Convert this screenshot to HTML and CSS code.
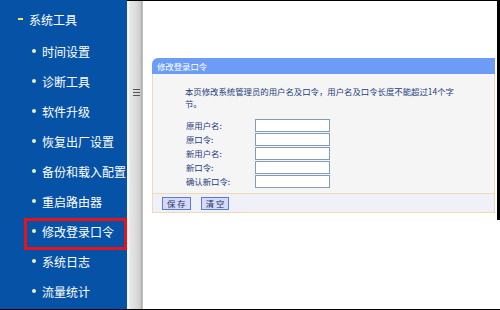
FILE: index.html
```html
<!DOCTYPE html>
<html lang="zh-CN">
<head>
<meta charset="utf-8">
<title>修改登录口令</title>
<link rel="stylesheet" href="styles.css">
</head>
<body>
<div class="page">
  <nav class="sidebar">
    <div class="group"><span class="dash"></span>系统工具</div>
    <ul class="menu">
      <li><span class="dot"></span>时间设置</li>
      <li><span class="dot"></span>诊断工具</li>
      <li><span class="dot"></span>软件升级</li>
      <li><span class="dot"></span>恢复出厂设置</li>
      <li><span class="dot"></span>备份和载入配置</li>
      <li><span class="dot"></span>重启路由器</li>
      <li class="hl"><span class="dot"></span>修改登录口令</li>
      <li><span class="dot"></span>系统日志</li>
      <li><span class="dot"></span>流量统计</li>
    </ul>
  </nav>
  <div class="splitter">
    <svg class="grip" width="7" height="9" viewBox="0 0 7 9"><path d="M0 1.5H7M0 4.5H7M0 7.5H7" stroke="#555" stroke-width="1.2"/></svg>
  </div>
  <main class="main">
    <div class="frame">
      <section class="panel">
        <div class="panel-head">修改登录口令</div>
        <div class="panel-body">
          <p class="desc">本页修改系统管理员的用户名及口令，用户名及口令长度不能超过14个字节。</p>
          <div class="form">
            <label>原用户名:</label><input type="text">
            <label>原口令:</label><input type="password">
            <label>新用户名:</label><input type="text">
            <label>新口令:</label><input type="password">
            <label>确认新口令:</label><input type="password">
          </div>
        </div>
        <div class="panel-foot">
          <button class="btn">保 存</button>
          <button class="btn">清 空</button>
        </div>
      </section>
    </div>
  </main>
</div>
</body>
</html>
```

FILE: styles.css
```css
* { box-sizing: border-box; }
html, body { margin: 0; padding: 0; background: #fff; }
body { font-family: "Noto Sans CJK SC", "Noto Sans", sans-serif; }

.page {
  display: flex;
  width: 500px;
  height: 310px;
  border-bottom: 1px solid #000;
  overflow: hidden;
}

/* sidebar */
.sidebar {
  width: 127px;
  flex: none;
  background: #0652a6;
  color: #fff;
  padding-top: 10px;
  font-size: 12px;
}
.group {
  display: flex;
  align-items: center;
  height: 18px;
  padding-left: 18px;
  margin-bottom: 8px;
}
.dash {
  width: 5px;
  height: 2px;
  background: #f2e35a;
  margin-right: 6px;
}
.menu { list-style: none; margin: 0; padding: 0; }
.menu li {
  display: flex;
  align-items: center;
  height: 30px;
  padding-left: 32px;
  white-space: nowrap;
}
.dot {
  width: 4px;
  height: 4px;
  border-radius: 50%;
  background: #eef5a8;
  margin-right: 6px;
}
.menu li.hl { position: relative; }
.menu li.hl::after {
  content: "";
  position: absolute;
  left: 24px;
  top: 2px;
  width: 97px;
  height: 26px;
  border: 3px solid #e3141c;
}

/* splitter */
.splitter {
  width: 16px;
  flex: none;
  border-top: 1px solid #000;
  background: linear-gradient(to right, #f4f4f4 0, #f4f4f4 2px, #e6e6e6 3px, #dcdcdc 9px, #cfcfcf 13px, #a8a8a8 15px, #d8d8d8 16px);
  padding-top: 87px;
  padding-left: 6px;
}
.grip { display: block; }

/* main */
.main { flex: 1; }
.frame {
  height: 220px;
  border-top: 1px solid #000;
  border-right: 3px solid #000;
  padding: 57px 2px 0 9px;
}
.panel {
  font-size: 8.4px;
  color: #1d3c7c;
}
.panel-head {
  height: 16px;
  line-height: 16px;
  background: #6c9cf6;
  color: #fff;
  padding-left: 5px;
  border-top-left-radius: 6px;
}
.panel-body {
  background: #f5f5f5;
  border-left: 1px solid #f0d9b4;
  border-right: 1px solid #f0d9b4;
  padding: 11px 0 5px 32px;
}
.desc {
  margin: 0;
  width: 272px;
  line-height: 12px;
}
.form {
  display: grid;
  grid-template-columns: 70px 75px;
  grid-auto-rows: 14px;
  align-items: center;
  margin-top: 9px;
}
.form label { padding-left: 1px; white-space: nowrap; }
.form input {
  width: 75px;
  height: 13px;
  margin: 0;
  padding: 0;
  border: 1px solid #7f9db9;
  background: #fff;
}
.panel-foot {
  display: flex;
  gap: 10px;
  align-items: center;
  height: 20px;
  padding-left: 9px;
  background: #eff0f8;
  border: 1px solid #f0d9b4;
}
.btn {
  height: 13px;
  margin: 0;
  padding: 0 4px;
  font-family: inherit;
  font-size: 8.4px;
  line-height: 11px;
  color: #1d2f6c;
  background: #d5dbf7;
  border: 1px solid #5d7ccb;
  border-radius: 0;
}
```
